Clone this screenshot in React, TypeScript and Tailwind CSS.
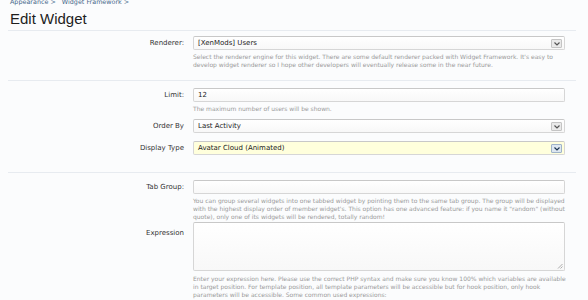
import React from "react";

const Chevron = ({ blue }: { blue?: boolean }) => (
  <span
    className={`absolute right-[2px] top-[2px] flex h-[9px] w-[11px] items-center justify-center rounded-[1px] border ${
      blue ? "border-[#9fb3c8] bg-[#dde7f1]" : "border-[#c4c4c4] bg-[#e9e9e9]"
    }`}
  >
    <svg width="6" height="4" viewBox="0 0 6 4">
      <path d="M0.5 0.5 L3 3 L5.5 0.5" fill="none" stroke={blue ? "#1d3550" : "#555"} strokeWidth="1.2" />
    </svg>
  </span>
);

const Label = ({ children, top }: { children: React.ReactNode; top?: boolean }) => (
  <div
    className={`w-[184px] shrink-0 text-right text-[7px] text-[#333] ${
      top ? "pt-[6px]" : "flex h-[14px] items-center justify-end"
    }`}
  >
    {children}
  </div>
);

const Help = ({ lines, mt = "mt-[3px]" }: { lines: string[]; mt?: string }) => (
  <div className={`${mt} text-[6px] leading-[8px] text-[#9a9a9a]`}>
    {lines.map((l, i) => (
      <div key={i} className="whitespace-nowrap">
        {l}
      </div>
    ))}
  </div>
);

const Box = ({
  children,
  select,
  yellow,
  h = "h-[14px]",
}: {
  children?: React.ReactNode;
  select?: boolean;
  yellow?: boolean;
  h?: string;
}) => (
  <div
    className={`relative ${h} w-[372px] rounded-[2px] border border-[#d6d6d6] border-t-[#c8c8c8] ${
      yellow ? "bg-[#ffffdc]" : "bg-gradient-to-b from-[#ffffff] to-[#f8f8f8]"
    } flex items-center pl-[4px] text-[7px] text-[#222]`}
  >
    {children}
    {select && <Chevron blue={yellow} />}
  </div>
);

const Divider = () => <div className="mx-[8px] h-px w-[568px] bg-[#e7ebf0]" />;

export default function App() {
  return (
    <div
      className="h-[300px] w-[588px] overflow-hidden bg-[#fbfcfd]"
      style={{ fontFamily: '"DejaVu Sans", Verdana, sans-serif' }}
    >
      <div className="-mt-[1px] h-[8px] whitespace-nowrap pl-[10px] text-[6.4px] leading-[7px] text-[#46688b]">
        Appearance &gt;&nbsp;&nbsp;&nbsp;Widget Framework &gt;
      </div>
      <div
        className="h-[23px] pl-[10px] text-[15px] leading-[23px] text-[#1e1e1e]"
        style={{ fontFamily: '"Liberation Sans", Arial, sans-serif' }}
      >
        Edit Widget
      </div>
      <Divider />

      {/* Renderer */}
      <div className="flex pt-[5px] pb-[11px]">
        <Label>Renderer:</Label>
        <div className="ml-[9px]">
          <Box select>[XenMods] Users</Box>
          <Help
            lines={[
              "Select the renderer engine for this widget. There are some default renderer packed with Widget Framework. It's easy to",
              "develop widget renderer so I hope other developers will eventually release some in the near future.",
            ]}
          />
        </div>
      </div>
      <Divider />

      {/* Limit */}
      <div className="flex pt-[7px]">
        <Label>Limit:</Label>
        <div className="ml-[9px]">
          <Box>12</Box>
          <Help lines={["The maximum number of users will be shown."]} />
        </div>
      </div>

      <div className="flex pt-[6px]">
        <Label>Order By</Label>
        <div className="ml-[9px]">
          <Box select>Last Activity</Box>
        </div>
      </div>

      <div className="flex pt-[8px] pb-[17px]">
        <Label>Display Type</Label>
        <div className="ml-[9px]">
          <Box select yellow>
            Avatar Cloud (Animated)
          </Box>
        </div>
      </div>
      <Divider />

      {/* Tab group */}
      <div className="flex pt-[7px]">
        <Label>Tab Group:</Label>
        <div className="ml-[9px]">
          <Box />
          <Help
            lines={[
              "You can group several widgets into one tabbed widget by pointing them to the same tab group. The group will be displayed",
              "with the highest display order of member widget's. This option has one advanced feature: if you name it \"random\" (without",
              "quote), only one of its widgets will be rendered, totally random!",
            ]}
          />
        </div>
      </div>

      <div className="flex pt-[1px]">
        <Label top>Expression</Label>
        <div className="ml-[9px]">
          <Box h="h-[49px]">
            <svg className="absolute bottom-[1px] right-[1px]" width="6" height="6" viewBox="0 0 6 6">
              <path d="M5.5 1 L1 5.5 M5.5 3.5 L3.5 5.5" stroke="#999" strokeWidth="0.8" />
            </svg>
          </Box>
          <Help
            mt="mt-[4px]"
            lines={[
              "Enter your expression here. Please use the correct PHP syntax and make sure you know 100% which variables are available",
              "in target position. For template position, all template parameters will be accessible but for hook position, only hook",
              "parameters will be accessible. Some common used expressions:",
            ]}
          />
        </div>
      </div>
    </div>
  );
}
